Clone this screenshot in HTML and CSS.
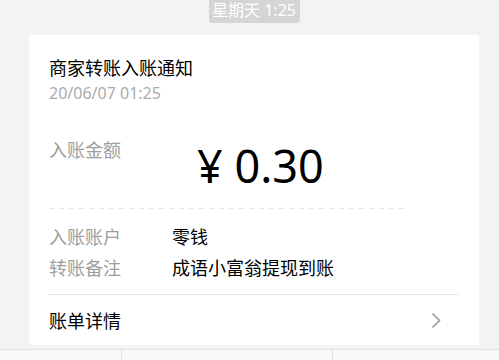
FILE: index.html
```html
<!DOCTYPE html>
<html lang="zh-CN">
<head>
    <meta charset="UTF-8">
    <meta name="viewport" content="width=device-width, initial-scale=1.0">
    <title>商家转账入账通知</title>
    <link rel="stylesheet" href="styles.css">
</head>
<body>
    <div class="chat">
        <div class="time-row">
            <span class="time-pill">星期天 1:25</span>
        </div>

        <div class="card">
            <div class="card-header">
                <div class="title">商家转账入账通知</div>
                <div class="date">20/06/07 01:25</div>
            </div>

            <div class="amount-block">
                <span class="label">入账金额</span>
                <span class="amount">¥ 0.30</span>
            </div>

            <div class="details">
                <div class="detail-row">
                    <span class="label">入账账户</span>
                    <span class="value">零钱</span>
                </div>
                <div class="detail-row">
                    <span class="label">转账备注</span>
                    <span class="value">成语小富翁提现到账</span>
                </div>
            </div>

            <div class="card-footer">
                <span>账单详情</span>
                <svg class="chevron" width="10" height="17" viewBox="0 0 10 17">
                    <path d="M1.5 1.5 L8.5 8.5 L1.5 15.5" fill="none" stroke="#9a9a9a" stroke-width="1.6"/>
                </svg>
            </div>
        </div>
    </div>

    <div class="bottom-bar">
        <div class="bar-cell first"></div>
        <div class="bar-cell middle"></div>
        <div class="bar-cell last"></div>
    </div>
</body>
</html>
```

FILE: styles.css
```css
* {
    margin: 0;
    padding: 0;
    box-sizing: border-box;
}

body {
    font-family: 'Noto Sans', 'Noto Sans CJK SC', sans-serif;
    background: #f3f3f3;
    color: #000;
    width: 499px;
    height: 360px;
    overflow: hidden;
}

.chat {
    padding: 0 20px 0 29px;
}

.time-row {
    display: flex;
    justify-content: center;
}

.time-pill {
    display: block;
    width: 91px;
    height: 23px;
    line-height: 21px;
    background: #d5d5d5;
    color: #fff;
    font-size: 16px;
    text-align: center;
    border-radius: 0 0 3px 3px;
}

.card {
    margin-top: 12px;
    height: 310px;
    background: #fff;
    border-radius: 3px;
    padding: 0 20px;
}

.card-header {
    padding-top: 20px;
}

.title {
    font-size: 18px;
    line-height: 26px;
}

.date {
    font-size: 16px;
    line-height: 24px;
    color: #ababab;
}

.label {
    font-size: 18px;
    color: #9e9e9e;
}

.amount-block {
    width: 356px;
    display: flex;
    align-items: flex-start;
    padding: 33px 0 17px;
    background-image: linear-gradient(to right, #e6e6e6 50%, transparent 50%);
    background-size: 10px 1px;
    background-repeat: repeat-x;
    background-position: left bottom;
}

.amount-block .label {
    line-height: 24px;
}

.amount {
    margin: 2px 0 0 76px;
    font-size: 45px;
    line-height: 52px;
}

.details {
    padding: 13px 0 10px;
    border-bottom: 1px solid #e5e5e5;
}

.detail-row {
    display: flex;
    line-height: 31px;
}

.detail-row .label {
    width: 123px;
}

.value {
    font-size: 18px;
}

.card-footer {
    height: 50px;
    display: flex;
    align-items: center;
    justify-content: space-between;
    font-size: 18px;
}

.chevron {
    margin-right: 18px;
}

.bottom-bar {
    margin-top: 4px;
    height: 20px;
    display: flex;
    background: #f9f9f9;
    border-top: 1px solid #e2e2e2;
}

.bar-cell {
    border-right: 1px solid #e2e2e2;
}

.bar-cell.first {
    width: 122px;
}

.bar-cell.middle {
    width: 211px;
}

.bar-cell.last {
    flex: 1;
    border-right: none;
}
```
